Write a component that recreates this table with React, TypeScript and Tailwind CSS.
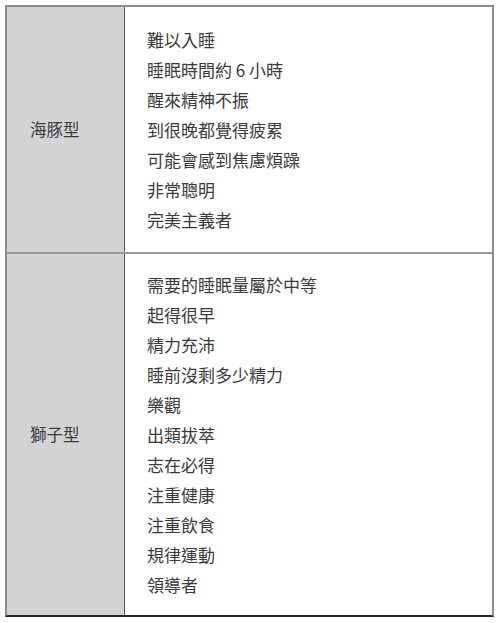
const rows = [
  {
    type: "海豚型",
    traits: [
      "難以入睡",
      "睡眠時間約 6 小時",
      "醒來精神不振",
      "到很晚都覺得疲累",
      "可能會感到焦慮煩躁",
      "非常聰明",
      "完美主義者",
    ],
  },
  {
    type: "獅子型",
    traits: [
      "需要的睡眠量屬於中等",
      "起得很早",
      "精力充沛",
      "睡前沒剩多少精力",
      "樂觀",
      "出類拔萃",
      "志在必得",
      "注重健康",
      "注重飲食",
      "規律運動",
      "領導者",
    ],
  },
];

export default function App() {
  return (
    <div className="h-[623px] w-[500px] bg-white pl-[5px] pt-[5px] font-['Noto_Sans_CJK_TC','Noto_Sans',sans-serif] text-[#3a3a3a]">
      <div className="flex h-[612px] w-[489px] flex-col border-2 border-[#8c8c8c] border-b-[#262626]">
        {rows.map((row, i) => (
          <div
            key={row.type}
            className={
              i === 0
                ? "flex h-[247px] border-b-2 border-[#9a9a9a]"
                : "flex flex-1"
            }
          >
            <div className="flex w-[118px] shrink-0 items-center border-r-[1.5px] border-[#555] bg-[#d3d3d5] pl-[23px] text-[16.5px]">
              {row.type}
            </div>
            <div className="flex flex-1 flex-col justify-center pl-[22px] text-[17px] leading-[30px]">
              {row.traits.map((t) => (
                <p key={t}>{t}</p>
              ))}
            </div>
          </div>
        ))}
      </div>
    </div>
  );
}
